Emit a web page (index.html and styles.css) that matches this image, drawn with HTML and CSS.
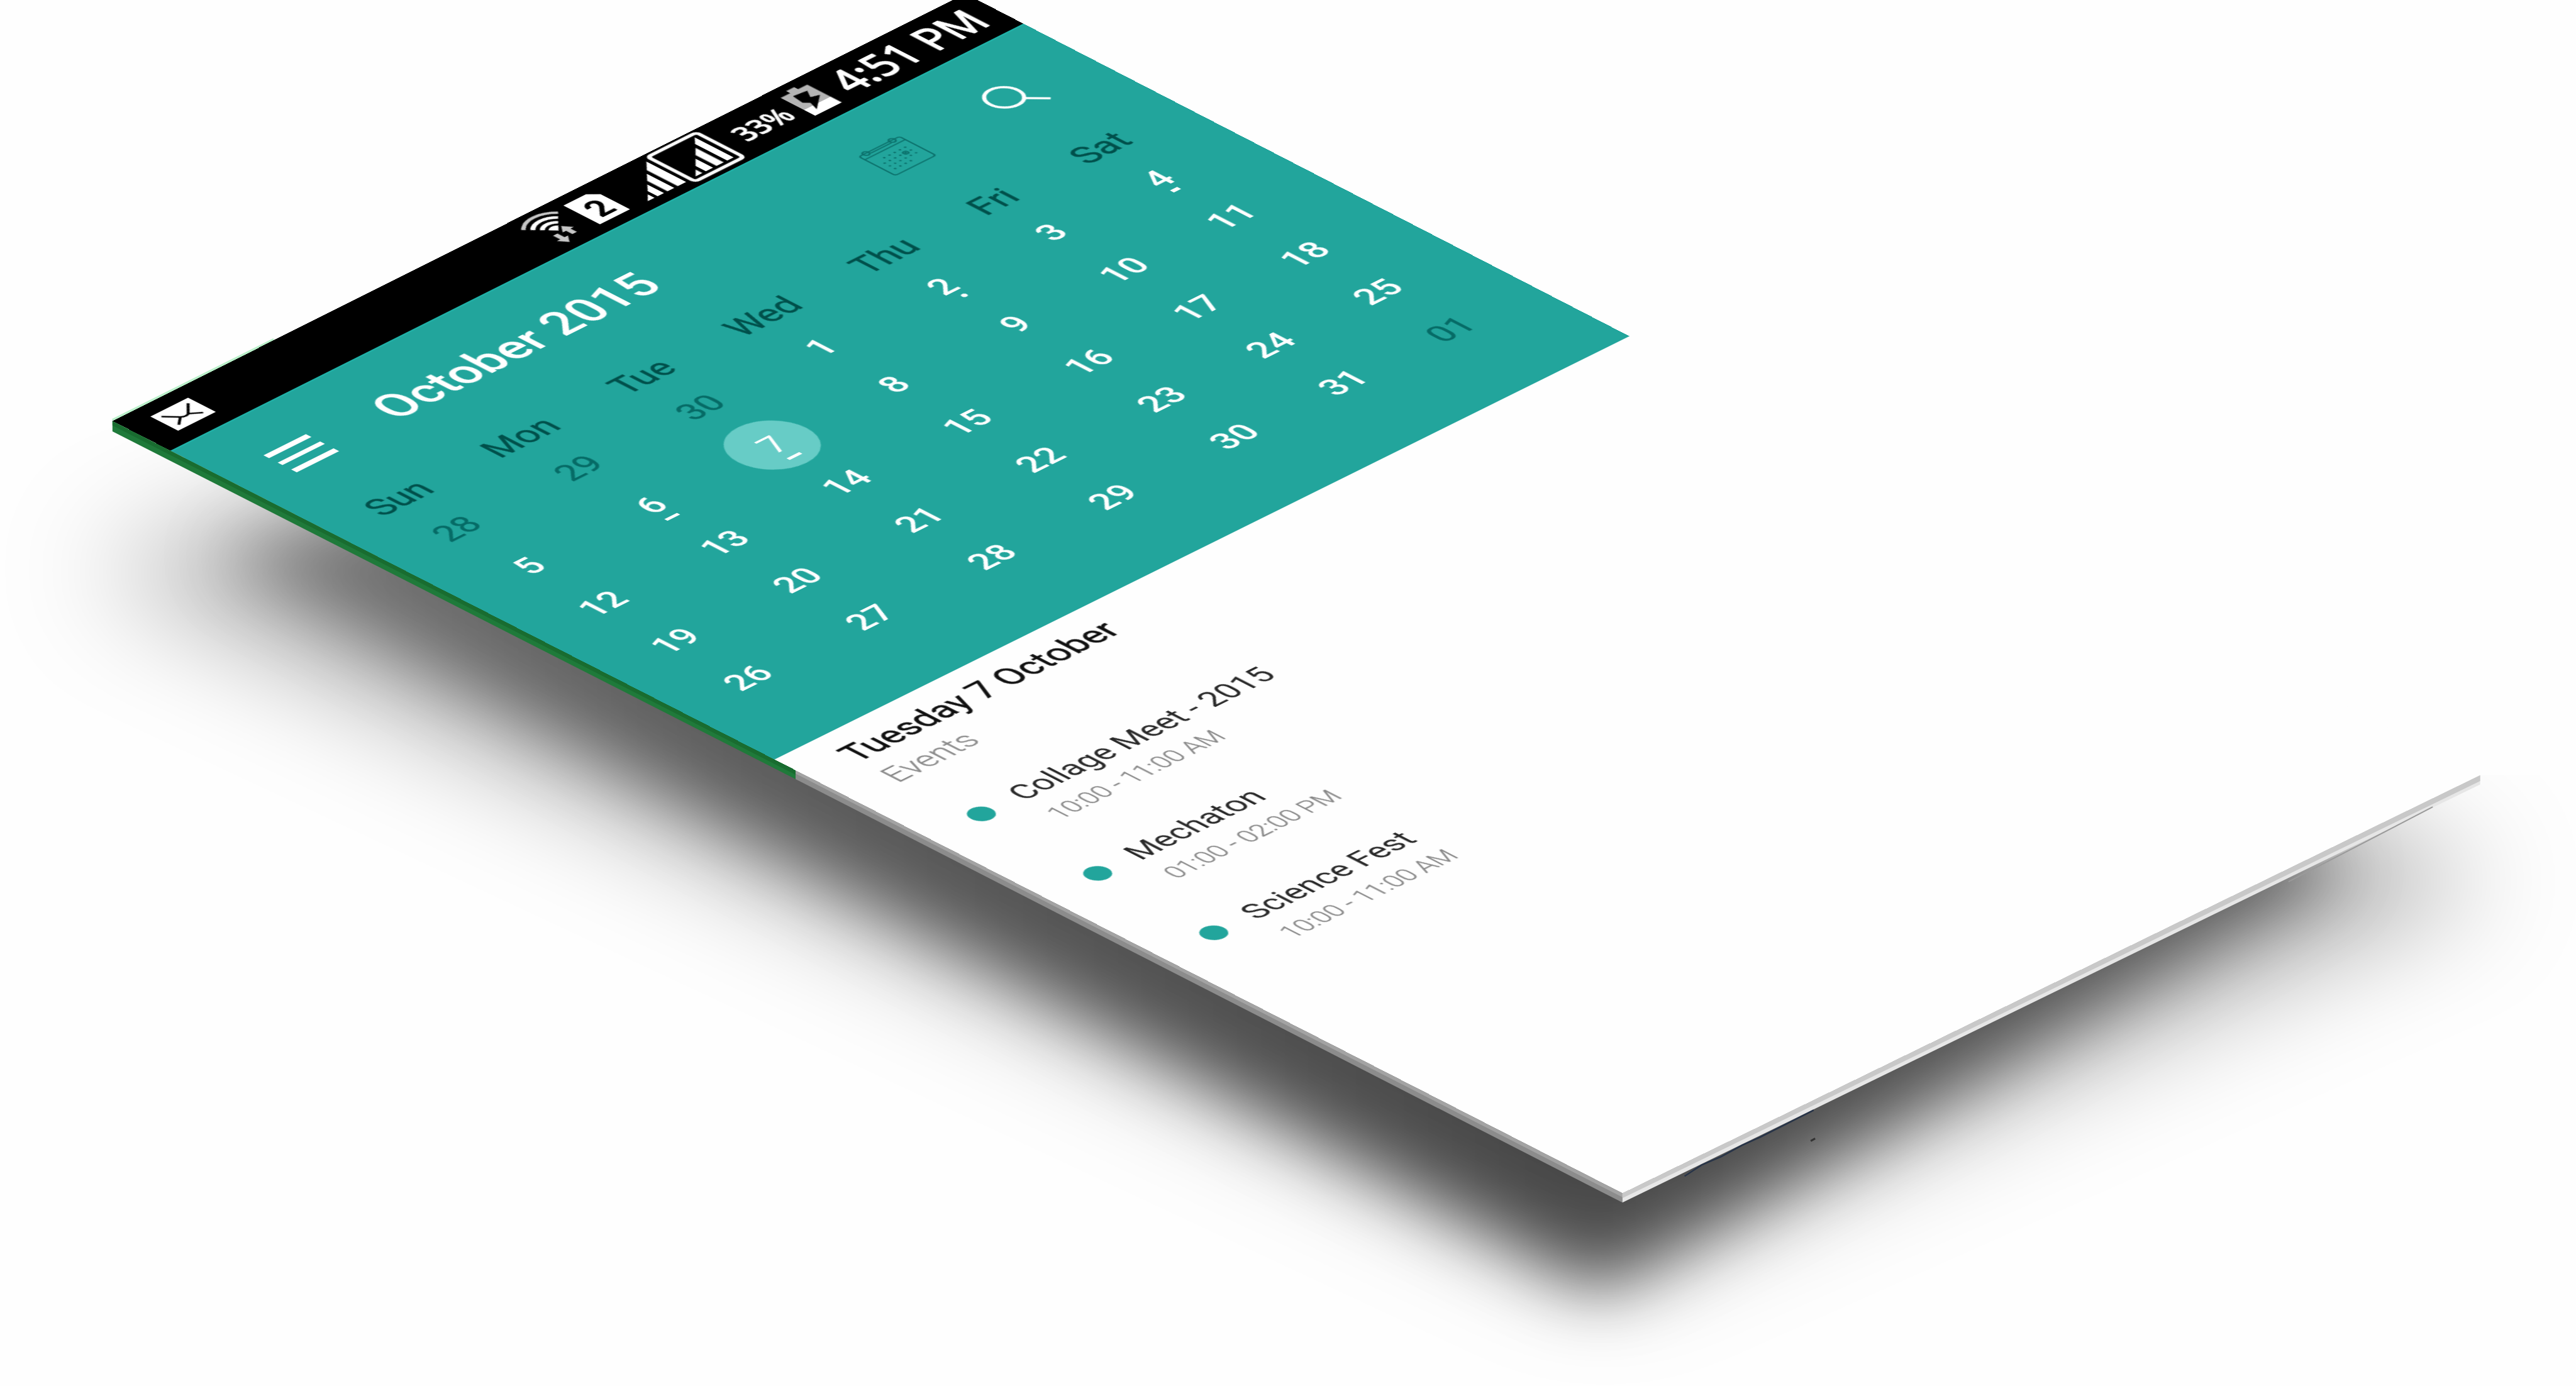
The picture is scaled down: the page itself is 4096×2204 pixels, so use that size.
FILE: index.html
```html
<!DOCTYPE html>
<html lang="en">
<head>
<meta charset="utf-8">
<title>Calendar – October 2015</title>
<link rel="stylesheet" href="styles.css">
</head>
<body>
<main class="stage">
  <svg class="backdrop" viewBox="0 0 5268 2834" preserveAspectRatio="none" aria-hidden="true">
    <defs>
      <filter id="soft" x="-20%" y="-20%" width="140%" height="140%"><feGaussianBlur stdDeviation="70"/></filter>
      <filter id="wide" x="-20%" y="-20%" width="140%" height="140%"><feGaussianBlur stdDeviation="115"/></filter>
      <linearGradient id="shade" gradientUnits="userSpaceOnUse" x1="300" y1="0" x2="5000" y2="0">
        <stop offset="0" stop-color="#000" stop-opacity=".3"/>
        <stop offset=".25" stop-color="#000" stop-opacity=".47"/>
        <stop offset=".62" stop-color="#000" stop-opacity=".61"/>
        <stop offset="1" stop-color="#000" stop-opacity=".45"/>
      </linearGradient>
    </defs>
    <polygon points="180,1160 2100,500 5100,1800 3280,2610" fill="#000" fill-opacity=".3" filter="url(#wide)"/>
    <polygon points="440,1130 2100,700 4800,1770 3270,2640" fill="url(#shade)" filter="url(#soft)"/>
    <polygon points="0,0 1974,-13 5072,1585 3318,2440 230,861 0,861" fill="#fefefe"/>
    <polygon points="1974,-13 5268,-13 5268,1585 5072,1585" fill="#fefefe"/>
    <polygon points="230,861 1627,1574 1627,1593 230,882" fill="#1f7a3a"/>
    <polygon points="230,861 1627,1574 1627,1584 230,870" fill="#196c30"/>
    <polygon points="1627,1574 3318,2440 3318,2459 1627,1593" fill="#8c8c8c"/>
    <polygon points="1627,1574 3318,2440 3318,2448 1627,1582" fill="#a3a3a3"/>
    <polygon points="3318,2440 5072,1585 5072,1604 3318,2459" fill="#e6e6e6"/>
    <polygon points="3318,2440 5072,1585 5072,1597 3318,2450" fill="#c8c8c8"/>
    <path d="M4680 1803L4975 1650" stroke="#9a9a9a" stroke-width="2.5"/>
    <path d="M3445 2405L3480 2382L3520 2365L3562 2342L3600 2325L3709 2270" stroke="#263348" stroke-width="3" fill="none"/>
    <path d="M3703 2333L3712 2328" stroke="#333" stroke-width="4"/>
    <path d="M230 859L560 694" stroke="#b9efc9" stroke-width="5"/>
  </svg>

  <section class="screen">
    <header class="status">
      <svg class="mail" viewBox="0 0 48 35"><rect width="48" height="35" fill="#fff"/><path d="M7 7L18.500 19Q23 23 28 20L41 7M19 19L8 28M28 20L39 28" fill="none" stroke="#000" stroke-width="2.600"/></svg>
      <svg class="tray" viewBox="490 0 590 73">
        <g fill="none">
          <path d="M503.700 18.500A31 31 0 0 1 547.700 18.500" stroke="#c6c6c6" stroke-width="4"/>
          <path d="M509.700 24.500A22.500 22.500 0 0 1 541.700 24.500" stroke="#fff" stroke-width="4.500"/>
          <path d="M515.700 30.500A14 14 0 0 1 535.700 30.500" stroke="#fff" stroke-width="4.500"/>
        </g>
        <path d="M525.700 41L519.500 34.500A8.500 8.500 0 0 1 531.900 34.500Z" fill="#fff"/>
        <path d="M533 37L540 46H535.800V54H530.200V46H526ZM518.500 62L511.500 53H515.700V44H521.300V53H525.500Z" fill="#c6c6c6"/>
        <path d="M560 13H588.500L598 22V59H560Z" fill="#fff"/>
        <text class="sim" x="580" y="52" text-anchor="middle">2</text>
        <path d="M668 10V60H657.500V21ZM653 25.500V60H644.500V34.500ZM640 39V60H632V47.500ZM628 51.500V60H619.500Z" fill="#fff"/>
        <rect x="674.500" y="5" width="61.500" height="60" rx="4" fill="#000" stroke="#fff" stroke-width="4.500"/>
        <path d="M729 10V59H721V18.500ZM716.500 23.500V59H707.500V32.500ZM703 37V59H694V46ZM689.500 50.500V59H681Z" fill="#fff"/>
        <text class="percent" x="757" y="49.500" textLength="63" lengthAdjust="spacingAndGlyphs">33%</text>
        <path d="M833 14.500H845V9.500H855V14.500H866.500V44H833Z" fill="#b4b4b4"/>
        <path d="M833 44H866.500V58H833Z" fill="#fff"/>
        <path d="M859 22L843 20L841 34L846 39L842 51L862 35L853 32Z" fill="#000"/>
        <text class="clock" x="885" y="53.500" textLength="175" lengthAdjust="spacingAndGlyphs">4:51 PM</text>
      </svg>
    </header>

    <section class="calendar">
      <div class="bar">
        <div class="menu"><i></i><i></i><i></i></div>
        <h1 class="title">October 2015</h1>
        <svg class="agenda" viewBox="809 132 55 52" fill="none" stroke="#0b6f6a" stroke-width="1.700">
          <rect x="811" y="136" width="51" height="46" rx="3"/>
          <path d="M811 143.500H862M823 139H849"/>
          <circle cx="819.500" cy="136.500" r="3.300"/><circle cx="852.500" cy="136.500" r="3.300"/>
          <g stroke-width="2.400" stroke-linecap="round" stroke-dasharray="0 6.600"><path d="M826 153H853M819.500 160H853M819.500 166.600H854M819.500 173.300H841"/></g>
          <circle cx="846" cy="160" r="2.500"/>
        </svg>
        <svg class="search" viewBox="957 130 52 55" fill="none" stroke="#fff" stroke-width="3.800"><circle cx="977.500" cy="151.500" r="17.800"/><path d="M990 165.500L1006 181.500"/></svg>
      </div>
      <div class="grid weekdays"><b>Sun</b><b>Mon</b><b>Tue</b><b>Wed</b><b>Thu</b><b>Fri</b><b>Sat</b></div>
      <div class="grid days">
        <span class="out">28</span><span class="out">29</span><span class="out">30</span><span>1</span><span class="mark dot">2</span><span>3</span><span class="mark dash">4</span>
        <span>5</span><span class="mark">6</span><span class="mark today">7</span><span>8</span><span>9</span><span>10</span><span>11</span>
        <span>12</span><span>13</span><span>14</span><span>15</span><span>16</span><span>17</span><span>18</span>
        <span>19</span><span>20</span><span>21</span><span>22</span><span>23</span><span>24</span><span>25</span>
        <span>26</span><span>27</span><span>28</span><span>29</span><span>30</span><span>31</span><span class="out">01</span>
      </div>
    </section>

    <section class="events">
      <h2 class="date">Tuesday 7 October</h2>
      <p class="label">Events</p>
      <ul class="list">
        <li><i></i><div><p class="name">Collage Meet - 2015</p><p class="time">10:00 - 11:00 AM</p></div></li>
        <li><i></i><div><p class="name">Mechaton</p><p class="time">01:00 - 02:00 PM</p></div></li>
        <li><i></i><div><p class="name">Science Fest</p><p class="time">10:00 - 11:00 AM</p></div></li>
      </ul>
    </section>
  </section>
</main>
</body>
</html>
```
FILE: styles.css
```css
* { box-sizing: border-box; margin: 0; padding: 0; }
html, body { width: 4096px; height: 2204px; overflow: hidden; background: #fefefe; }
body { font-family: Roboto, "Liberation Sans", sans-serif; }
.stage { position: relative; width: 4096px; height: 2204px; overflow: hidden; }
.backdrop { display: block; width: 4096px; height: 2204px; }

/* the phone screen, laid flat in an isometric view */
.screen {
  position: absolute; top: 0; left: 0;
  width: 1080px; height: 1920px;
  display: flex; flex-direction: column;
  transform-origin: 0 0;
  transform: matrix3d(1.244398, -.629167, 0, -.000007146, 1.260948, .647172, 0, .000004082, 0, 0, 1, 0, 179.1, 669.5, 0, 1);
}

.status {
  height: 75px; display: flex; justify-content: space-between; align-items: flex-start;
  background: #000; border-bottom: 2px solid #1fb3a9; padding-left: 30px;
}
.mail { width: 48px; height: 35px; margin-top: 18px; }
.tray { width: 590px; height: 73px; }
.sim { font: 700 38px Roboto, sans-serif; fill: #000; }
.percent { font: 600 34px "Open Sans", sans-serif; fill: #fff; stroke: #fff; stroke-width: .6px; stroke-linejoin: round; }
.clock { font: 500 52px "Open Sans", sans-serif; fill: #fff; stroke: #fff; stroke-width: 1.800px; stroke-linejoin: round; }

.calendar { height: 763px; background: #22a59c; }
.bar { height: 166px; display: flex; align-items: center; padding: 0 72px 0 54px; }
.menu { width: 54px; display: flex; flex-direction: column; gap: 11px; }
.menu i { height: 6.500px; background: #fff; }
.title { margin-left: 76px; margin-right: auto; font-size: 55.900px; font-weight: 500; color: #fff; white-space: nowrap; }
.agenda { width: 55px; height: 52px; margin-right: 93px; }
.search { width: 52px; height: 55px; }

.grid {
  display: grid; padding-left: 9px;
  grid-template-columns: 154px 156px 153px 153px 154px 120px 150px;
  text-align: center; font-size: 39px;
}
.weekdays { height: 63px; padding-left: 10px; line-height: 69px; color: #00504b; font-size: 40px; -webkit-text-stroke: .4px #00504b; }
.weekdays b { font-weight: 400; }
.days { grid-auto-rows: 92.300px; line-height: 92.300px; color: #fff; font-weight: 500; }
.days span { position: relative; }
.days .out { color: #066b66; font-weight: 400; -webkit-text-stroke: .4px #066b66; }
.mark::after {
  content: ""; position: absolute; left: 50%; top: 71px;
  width: 16px; height: 4px; margin-left: -9px; background: #fff;
}
.dot::after { width: 6px; height: 6px; margin-left: 0; top: 67px; border-radius: 50%; }
.dash::after { width: 9px; height: 5px; margin-left: -7px; top: 67px; }
.days .today { font-weight: 400; z-index: 0; }
.today::before {
  content: ""; position: absolute; z-index: -1; left: 50%; top: 2px;
  width: 87px; height: 87px; margin-left: -45px; border-radius: 50%; background: #67ccc6;
}

.events { flex: 1; background: #fefefe; padding: 17px 0 0 50px; }
.date { font-size: 40.400px; line-height: 52px; font-weight: 400; color: #111; -webkit-text-stroke: .5px #111; }
.label { font-size: 36.500px; line-height: 40px; margin-top: 6px; font-weight: 300; color: #8a8a8a; -webkit-text-stroke: .3px #8a8a8a; }
.list { list-style: none; margin-top: 58px; display: flex; flex-direction: column; gap: 56px; }
.list li { display: flex; gap: 31px; height: 92px; padding-left: 2px; }
.list i { width: 26px; height: 26px; margin-top: 12px; border-radius: 50%; background: #22a59c; }
.name { font-size: 36.200px; line-height: 48px; font-weight: 400; color: #2a2a2a; }
.time { font-size: 28.700px; line-height: 40px; margin-top: 4px; font-weight: 300; color: #868686; -webkit-text-stroke: .3px #868686; }
```
